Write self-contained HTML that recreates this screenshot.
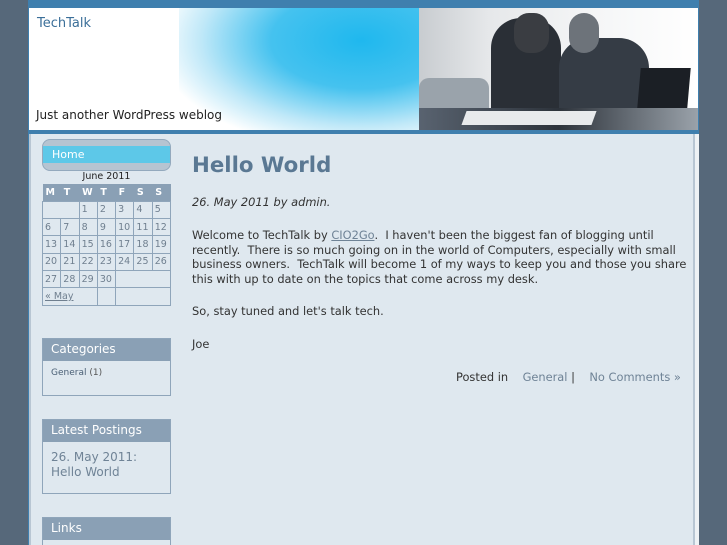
<!DOCTYPE html>
<html><head><meta charset="utf-8"><style>
*{margin:0;padding:0;box-sizing:border-box}
html,body{width:727px;height:545px;overflow:hidden}
body{background:#56687a;font-family:"DejaVu Sans","Liberation Sans",sans-serif;position:relative}
.a{position:absolute}
#wrap{left:28px;top:0;width:671px;height:545px;background:#3f7fae}
#head{left:29px;top:8px;width:669px;height:122px;background:#fff;overflow:hidden}
#sky{left:150px;top:-20px;width:280px;height:150px;background:radial-gradient(ellipse at 65% 35%,#1fb8ee 0%,#45c2ef 35%,#bfe8f8 62%,rgba(255,255,255,0) 80%)}
#photo{left:390px;top:0;width:279px;height:122px;background:linear-gradient(90deg,#c8ccd0 0%,#e6e8ea 25%,#f4f5f6 60%,#fff 100%)}
#content{left:29px;top:134px;width:666px;height:411px;background:#dfe8ef;border-left:2px solid #b8c6d3;border-right:2px solid #b8c6d3}
#rwhite{left:695px;top:134px;width:4px;height:411px;background:#eef2f5}
.box{background:#dfe8ef;border:1px solid #8fa5ba;overflow:hidden}
.bh{background:#8aa0b5;color:#fff;font-size:12px;padding:3px 8px;height:22px}
td{border:1px solid #8fa5ba;font-size:9.5px;color:#6f7f8f;height:17.4px;padding-left:2px}
th{background:#8aa0b5;color:#fff;font-size:9.5px;height:17px;text-align:left;padding-left:3px}
.p{font-size:11.4px;color:#333;line-height:14.5px}
</style></head><body>
<div id="wrap" class="a"></div>
<div id="head" class="a">
 <div id="sky" class="a"></div>
 <div id="photo" class="a">
  <div class="a" style="left:0;top:70px;width:70px;height:45px;border-radius:10px;background:#9aa3ab"></div>
  <div class="a" style="left:72px;top:10px;width:70px;height:105px;border-radius:30px 30px 0 0;background:#2a2f36"></div>
  <div class="a" style="left:140px;top:30px;width:90px;height:85px;border-radius:30px 30px 0 0;background:#353c45"></div>
  <div class="a" style="left:150px;top:5px;width:30px;height:40px;border-radius:15px;background:#6d737a"></div>
  <div class="a" style="left:95px;top:5px;width:35px;height:40px;border-radius:15px;background:#3a3d42"></div>
  <div class="a" style="left:220px;top:60px;width:50px;height:40px;background:#1b1f25;transform:skewX(-5deg)"></div>
  <div class="a" style="left:0;top:100px;width:279px;height:22px;background:linear-gradient(90deg,#596370,#2d333b 50%,#9aa2aa)"></div>
  <div class="a" style="left:45px;top:103px;width:130px;height:14px;background:#e8eaec;transform:skewX(-20deg)"></div>
 </div>
 <div class="a" style="left:8px;top:8px;font-size:13px;color:#3b6f99">TechTalk</div>
 <div class="a" style="left:7px;top:100px;font-size:12px;color:#222">Just another WordPress weblog</div>
</div>
<div id="content" class="a"></div>
<div id="rwhite" class="a"></div>

<div class="a" style="left:42px;top:139px;width:129px;height:32px;border-radius:8px;background:#b6c4d1;border:1px solid #93a9bd"></div>
<div class="a" style="left:43px;top:146px;width:127px;height:17px;background:#5dc8e8;color:#fff;font-size:11px;padding:2px 0 0 9px">Home</div>
<div class="a" style="left:42px;top:171px;width:129px;text-align:center;font-size:9.5px;color:#222">June 2011</div>
<table class="a" style="left:42px;top:184px;width:129px;border-collapse:collapse">
<tr><th>M</th><th>T</th><th>W</th><th>T</th><th>F</th><th>S</th><th>S</th></tr>
<tr><td colspan="2"></td><td>1</td><td>2</td><td>3</td><td>4</td><td>5</td></tr>
<tr><td>6</td><td>7</td><td>8</td><td>9</td><td>10</td><td>11</td><td>12</td></tr>
<tr><td>13</td><td>14</td><td>15</td><td>16</td><td>17</td><td>18</td><td>19</td></tr>
<tr><td>20</td><td>21</td><td>22</td><td>23</td><td>24</td><td>25</td><td>26</td></tr>
<tr><td>27</td><td>28</td><td>29</td><td>30</td><td colspan="3"></td></tr>
<tr><td colspan="3" style="text-decoration:underline">« May</td><td></td><td colspan="3"></td></tr>
</table>

<div class="a box" style="left:42px;top:338px;width:129px;height:58px"><div class="bh">Categories</div><div style="font-size:9px;color:#555;padding:7px 8px"><span style="color:#4a5f75">General</span> (1)</div></div>
<div class="a box" style="left:42px;top:419px;width:129px;height:75px"><div class="bh">Latest Postings</div><div style="font-size:12px;color:#6f8396;padding:8px 8px;line-height:14.5px">26. May 2011:<br>Hello World</div></div>
<div class="a box" style="left:42px;top:517px;width:129px;height:28px;border-bottom:none"><div class="bh">Links</div></div>

<div class="a" style="left:192px;top:153px;font-size:21.3px;font-weight:bold;color:#5a7893">Hello World</div>
<div class="a p" style="left:192px;top:195px;font-style:italic">26. May 2011 by admin.</div>
<div class="a p" style="left:192px;top:228px;width:500px">Welcome to TechTalk by <u style="color:#6f8396">CIO2Go</u>.&nbsp; I haven't been the biggest fan of blogging until recently.&nbsp; There is so much going on in the world of Computers, especially with small business owners.&nbsp; TechTalk will become 1 of my ways to keep you and those you share this with up to date on the topics that come across my desk.</div>
<div class="a p" style="left:192px;top:304px">So, stay tuned and let's talk tech.</div>
<div class="a p" style="left:192px;top:337px">Joe</div>
<div class="a p" style="left:456px;top:370px">Posted in &nbsp;&nbsp; <span style="color:#6f8396">General</span> | &nbsp;&nbsp; <span style="color:#6f8396">No Comments »</span></div>
</body></html>
